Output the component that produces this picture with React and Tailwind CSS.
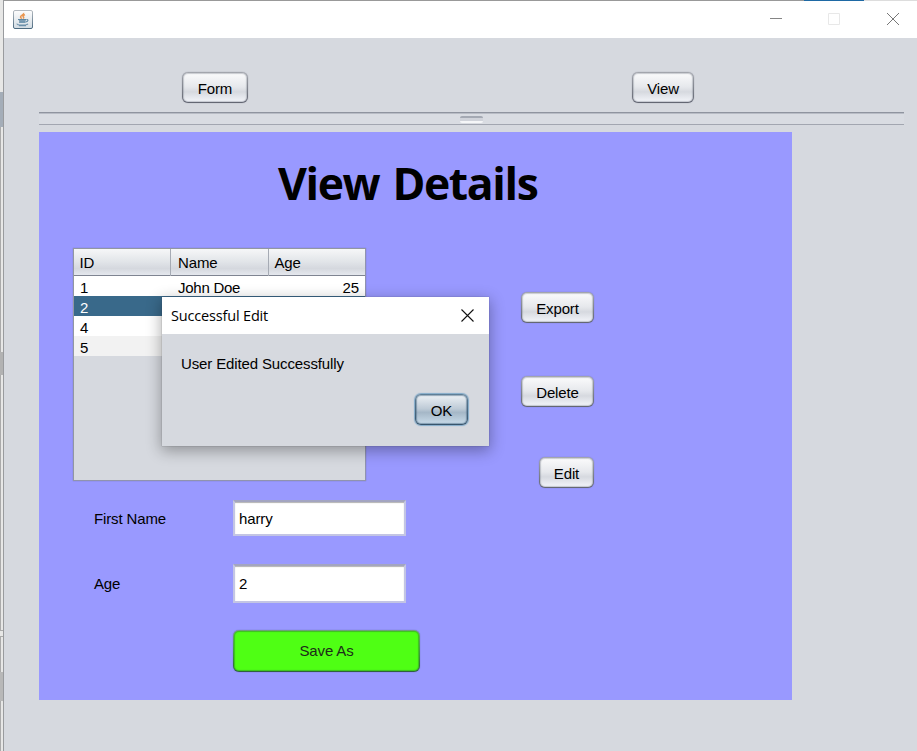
import React from 'react';

function Button({ children, className = '' }) {
  return (
    <button
      className={
        'flex items-center justify-center rounded-[6px] bg-[linear-gradient(#a4a7ae,#82868f_50%,#626672)] p-px shadow-[0_0_1px_rgba(80,80,100,0.6)] ' +
        className
      }
    >
      <span className="flex h-full w-full items-center justify-center rounded-[5px] bg-[linear-gradient(#fbfbfc,#e6e8ec_48%,#d6d9df_65%,#f3f5fa)] pt-[3px] shadow-[inset_0_0_1px_1px_rgba(110,115,130,0.35)]">
        {children}
      </span>
    </button>
  );
}

function JavaIcon() {
  return (
    <svg width="20" height="19" viewBox="0 0 20 19" fill="none">
      <defs>
        <linearGradient id="tile" x1="0" y1="0" x2="0" y2="1">
          <stop stopColor="#fdfdfd" />
          <stop offset="1" stopColor="#d3dce3" />
        </linearGradient>
        <linearGradient id="rim" x1="0" y1="0" x2="0" y2="1">
          <stop stopColor="#b4bac0" />
          <stop offset="1" stopColor="#4c6a80" />
        </linearGradient>
      </defs>
      <rect x="0.5" y="0.5" width="19" height="18" rx="1.5" fill="url(#tile)" stroke="url(#rim)" />
      <path d="M10.500 3c1 1.600-3 2.200-3 3.900 0 .8.800 1.200 1.300 1.700M12 4.800c-2 .6-2.500 1.400-1.600 2.100.6.500.2 1.100-.4 1.600" stroke="#ea9650" strokeWidth="1.500" />
      <path d="M5.500 9.500h7.500l-.7 2.800H6.500z" fill="#7c9db4" />
      <path d="M5 9.500h8M6 12.300h6.500M13.300 9.700c2.300-.7 2.300 1.800-.5 2.300" stroke="#5c87a4" strokeWidth="1.100" />
      <path d="M4.300 13.600c-1.500 1.900 8.700 2.100 10.700.2M6 15.700h7" stroke="#6b90aa" strokeWidth="1.100" />
    </svg>
  );
}

function TitleBar() {
  return (
    <header className="flex h-[37px] items-center bg-white">
      <div className="ml-[9px] -mt-px">
        <JavaIcon />
      </div>
      <svg className="ml-auto mr-[18px] -mt-px" width="130" height="14" viewBox="0 0 130 14" fill="none">
        <path d="M1 6.500h12" stroke="#858585" />
        <path d="M59.500 1.500h11v11h-11z" stroke="#e8e8e8" />
        <path d="M118 1l12 12m0-12l-12 12" stroke="#777" />
      </svg>
    </header>
  );
}

function DesktopEdge() {
  return (
    <div className="flex w-1 shrink-0 flex-col border-r border-[#999b9e] bg-[#e7e7e6]">
      <div className="h-[92px]" />
      <div className="h-[35px] bg-[#a4adb8]" />
      <div className="h-[225px] border-l border-[#aaa]" />
      <div className="h-[23px] bg-[#b2b2b2]" />
      <div className="h-[256px] border-b border-l border-[#aaa]" />
      <div className="h-[5px]" />
      <div className="h-[36px] border-l border-t border-[#aaa]" />
      <div className="h-[29px] bg-[#b8b8b8]" />
      <div className="flex-1 border-l border-[#aaa]" />
    </div>
  );
}

const users = [
  { id: 1, name: 'John Doe', age: 25, style: 'bg-white' },
  { id: 2, name: '', age: '', style: 'bg-[#39698a] text-white' },
  { id: 4, name: '', age: '', style: 'bg-white' },
  { id: 5, name: '', age: '', style: 'bg-[#f2f2f2]' },
];

function UserTable() {
  return (
    <div className="ml-[34px] h-[233px] w-[293px] border border-[#9297a1] border-b-[#9093ae] border-r-[#9093ae] bg-[#d6d9df] shadow-[0_0_1px_rgba(90,90,130,0.6)]">
      <div className="grid h-[27px] grid-cols-[97px_98px_1fr] border-b border-[#7f8491] bg-[linear-gradient(#f6f7f8,#e1e4e8_50%,#d5d8de_75%,#e5e8ee)] leading-[27px]">
        <div className="border-r border-[#a6abb4] pl-[5.500px]">ID</div>
        <div className="border-r border-[#a6abb4] pl-[7px]">Name</div>
        <div className="pl-[5.500px]">Age</div>
      </div>
      {users.map((u) => (
        <div key={u.id} className={'grid h-5 grid-cols-[97px_98px_1fr] leading-[23px] ' + u.style}>
          <div className="pl-1.5">{u.id}</div>
          <div className="pl-[7px] tracking-[-0.25px]">{u.name}</div>
          <div className="pr-1.5 text-right">{u.age}</div>
        </div>
      ))}
    </div>
  );
}

function Field({ label, value, className }) {
  return (
    <div className={'flex items-center pl-[55px] ' + className}>
      <label className="w-[139px] pt-px">{label}</label>
      <div className="flex h-full w-[173px] items-center border-2 border-[#c3c5e4] border-t-[#a3a5c0] bg-white pl-1 pt-px shadow-[inset_0_1px_1px_#b4b4b4]">
        {value}
      </div>
    </div>
  );
}

function Dialog() {
  return (
    <div className="absolute left-[162px] top-[297px] h-[149px] w-[327px] bg-[#d6d9df] shadow-[0_4px_14px_1px_rgba(0,0,0,0.32),0_0_1px_rgba(60,60,80,0.5)]">
      <div className="flex h-[37px] items-center justify-between bg-white pl-[9px] pr-[15px] font-['Open_Sans','Noto_Sans',sans-serif] text-[14.500px] tracking-[-0.17px]">
        <span>Successful Edit</span>
        <svg width="13" height="13" viewBox="0 0 13 13" fill="none">
          <path d="M.5.5l12 12m0-12l-12 12" stroke="#111" strokeWidth="1.100" />
        </svg>
      </div>
      <p className="ml-[19px] mt-[19px] leading-[22px]">User Edited Successfully</p>
      <button className="ml-auto mr-[21px] mt-[19px] flex h-[31px] w-[53px] items-center justify-center rounded-[6px] bg-[linear-gradient(#5f7f98,#37546c)] p-px shadow-[0_0_1px_1px_#82aac9]">
        <span className="flex h-full w-full items-center justify-center rounded-[5px] bg-[linear-gradient(#edf1f5,#bdcad6_48%,#a5b7c7_60%,#c8dbe9)] pt-[2px] shadow-[inset_0_0_1px_1px_rgba(60,95,125,0.5)]">
          OK
        </span>
      </button>
    </div>
  );
}

export default function App() {
  return (
    <div className="relative flex h-[751px] w-[917px] overflow-hidden bg-[#d6d9df] font-['Liberation_Sans',Arial,sans-serif] text-[15px] leading-5 tracking-[-0.13px] text-black">
      <DesktopEdge />
      <main className="min-w-0 flex-1">
        <div className="flex h-px bg-[#999]">
          <div className="ml-[800px] w-[60px] bg-[#1e69a4]" />
          <div className="flex-1 bg-[#ddd]" />
        </div>
        <TitleBar />
        <div className="flex h-[74px] pl-[178px] pt-[34px]">
          <Button className="h-[31px] w-[66px]">Form</Button>
          <Button className="ml-[384px] h-[31px] w-[62px]">View</Button>
        </div>
        <div className="ml-[35px] flex h-[13px] w-[865px] justify-center border-b border-t border-b-[#a2a6b0] border-t-[#8f949f] bg-[#d9dce2] shadow-[inset_0_1px_0_#b8bcc5]">
          <div className="mt-[3px] h-[7px] w-[23px] rounded-[2px] border-b-2 border-t-2 border-b-[#f5f6f8] border-t-[#a4a9b3] bg-[#d0d3da]" />
        </div>
        <section className="ml-[35px] mt-[7px] h-[568px] w-[753px] bg-[#9999ff]">
          <h1 className="h-[116px] pl-[239px] pt-[21px] font-['Open_Sans','Noto_Sans',sans-serif] text-[44.500px] font-bold leading-[60px] tracking-[-1.400px] [word-spacing:3px]">
            View Details
          </h1>
          <div className="flex">
            <div className="w-[482px]">
              <UserTable />
              <Field label="First Name" value="harry" className="mt-[19px] h-9" />
              <Field label="Age" value="2" className="mt-7 h-[39px]" />
              <button className="ml-[194px] mt-[27px] flex h-[42px] w-[187px] rounded-[6px] bg-[linear-gradient(#729c7c,#3f9f40_50%,#2f6040)] p-px shadow-[0_0_1px_rgba(50,70,90,0.7)]">
                <span className="flex h-full w-full items-center justify-center rounded-[5px] bg-[#4fff14] text-[#1d2b19] shadow-[inset_0_0_1px_1px_rgba(40,110,50,0.45)]">
                  Save As
                </span>
              </button>
            </div>
            <div className="flex w-[73px] flex-col items-end pt-11">
              <Button className="h-[31px] w-[73px]">Export</Button>
              <Button className="mt-[53px] h-[31px] w-[73px]">Delete</Button>
              <Button className="mt-[50px] h-[31px] w-[55px]">Edit</Button>
            </div>
          </div>
        </section>
      </main>
      <Dialog />
    </div>
  );
}
